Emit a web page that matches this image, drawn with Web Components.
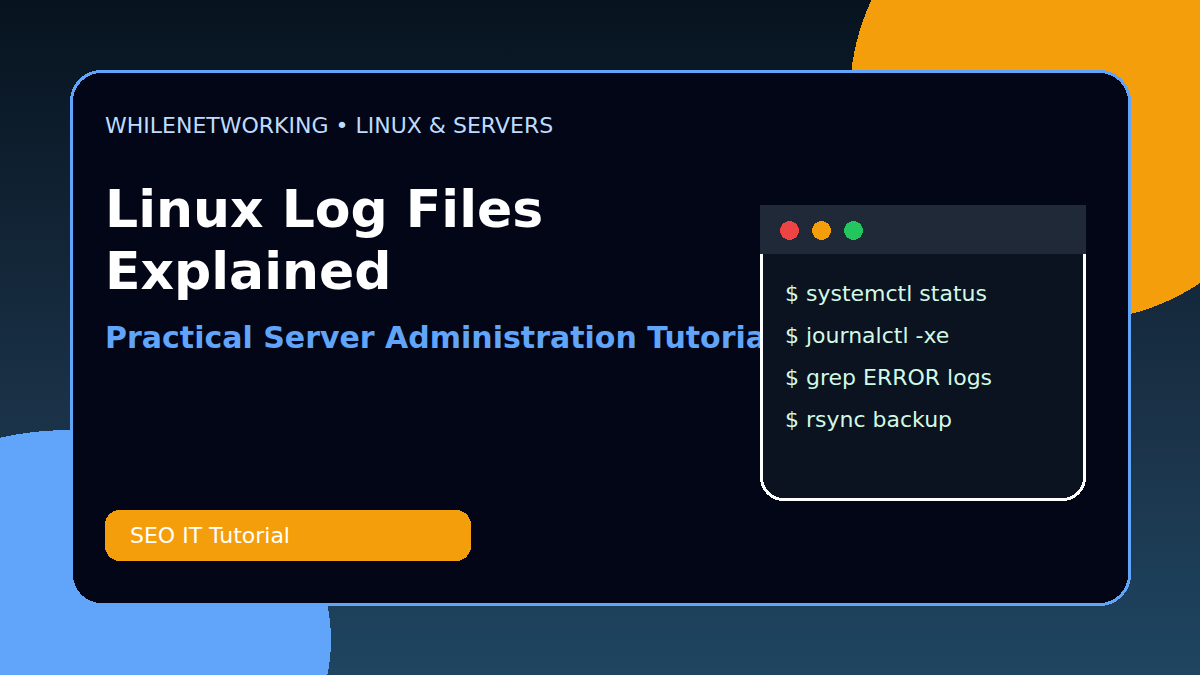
<!DOCTYPE html>
<html lang="en"><head><meta charset="utf-8"><title>Linux Log Files Explained</title>
<style>
html,body{margin:0;padding:0;background:#07131f}
body{font-family:"DejaVu Sans",sans-serif}
</style></head><body>
<template id="t-stage"><style>
:host{display:block;position:relative;width:1200px;height:675px;overflow:hidden;box-sizing:border-box;padding:70px 69px 69px 70px;background:linear-gradient(180deg,#07131f 0%,#1b3349 64%,#1e4561 100%)}
svg{position:absolute;inset:0;width:1200px;height:675px}
::slotted(*){position:relative}
</style><svg viewBox="0 0 1200 675" shape-rendering="crispEdges" aria-hidden="true"><circle cx="1075" cy="96" r="225" fill="#f59e0b"/><ellipse cx="70" cy="640" rx="261" ry="210" fill="#60a5fa"/></svg><slot></slot></template>

<template id="t-card"><style>
:host{display:flex;position:relative;box-sizing:border-box;height:536px;padding:43px 45px 45px 35px}
svg{position:absolute;left:0;top:0;width:1061px;height:536px}
.l{position:relative;display:flex;flex-direction:column;width:655px;flex:none;min-width:0}
.r{position:relative;flex:none;padding-top:92px}
</style><svg viewBox="0 0 1061 536" shape-rendering="crispEdges" aria-hidden="true"><rect x="1.5" y="1.5" width="1058" height="533" rx="30" fill="#020617" stroke="#60a5fa" stroke-width="3"/></svg>
<div class="l"><slot></slot></div><div class="r"><slot name="side"></slot></div></template>

<template id="t-tag"><style>:host{display:block;font-size:22px;line-height:26px;height:26px;color:#bfdbfe;white-space:nowrap}</style><slot></slot></template>

<template id="t-title"><style>:host{display:block;font-size:52px;line-height:62px;font-weight:700;color:#fff;margin-top:39px;width:500px}</style><slot></slot></template>

<template id="t-sub"><style>:host{display:block;font-size:30px;line-height:36px;font-weight:700;color:#60a5fa;white-space:nowrap;margin-top:18px}</style><slot></slot></template>

<template id="t-pill"><style>
:host{display:flex;position:relative;align-items:center;box-sizing:border-box;width:366px;height:51px;padding-left:25px;margin-top:auto;font-size:22px;color:#fff}
svg{position:absolute;left:0;top:0;width:366px;height:51px}
span{position:relative}
</style><svg viewBox="0 0 366 51" shape-rendering="crispEdges" aria-hidden="true"><rect width="366" height="51" rx="15" fill="#f59e0b"/></svg><span><slot></slot></span></template>

<template id="t-term"><style>
:host{display:block;position:relative;width:326px;height:296px;font-size:22px;color:#d1fae5}
svg.b{position:absolute;left:0;top:0;width:326px;height:296px}
.h{position:relative;display:flex;align-items:center;gap:13px;box-sizing:border-box;height:49px;padding:1px 0 0 20px;background:#1f2937}
.d{width:19px;height:19px;flex:none}
.d svg{display:block;width:19px;height:19px}
.c{position:relative;display:flex;flex-direction:column;padding:19px 0 0 25px}
</style><svg class="b" viewBox="0 0 326 296" shape-rendering="crispEdges" aria-hidden="true"><rect x="1.5" y="1.5" width="323" height="293" rx="22" fill="#0b1220" stroke="#fff" stroke-width="3"/></svg>
<div class="h"><span class="d"><svg viewBox="0 0 19 19" shape-rendering="crispEdges"><circle cx="9.5" cy="9.5" r="9.5" fill="#ef4444"/></svg></span><span class="d"><svg viewBox="0 0 19 19" shape-rendering="crispEdges"><circle cx="9.5" cy="9.5" r="9.5" fill="#f59e0b"/></svg></span><span class="d"><svg viewBox="0 0 19 19" shape-rendering="crispEdges"><circle cx="9.5" cy="9.5" r="9.5" fill="#22c55e"/></svg></span></div>
<div class="c"><slot></slot></div></template>

<template id="t-line"><style>:host{display:block;height:42px;line-height:42px;white-space:nowrap}</style><slot></slot></template>

<x-stage><x-card>
<x-tag>WHILENETWORKING • LINUX &amp; SERVERS</x-tag>
<x-title>Linux Log Files Explained</x-title>
<x-sub>Practical Server Administration Tutorial</x-sub>
<x-pill>SEO IT Tutorial</x-pill>
<x-term slot="side"><x-line>$ systemctl status</x-line><x-line>$ journalctl -xe</x-line><x-line>$ grep ERROR logs</x-line><x-line>$ rsync backup</x-line></x-term>
</x-card></x-stage>
<script>
for(const [tag,id] of [['x-stage','t-stage'],['x-card','t-card'],['x-tag','t-tag'],['x-title','t-title'],['x-sub','t-sub'],['x-pill','t-pill'],['x-term','t-term'],['x-line','t-line']]){
customElements.define(tag,class extends HTMLElement{constructor(){super();this.attachShadow({mode:'open'}).appendChild(document.getElementById(id).content.cloneNode(true))}})
}
</script></body></html>
